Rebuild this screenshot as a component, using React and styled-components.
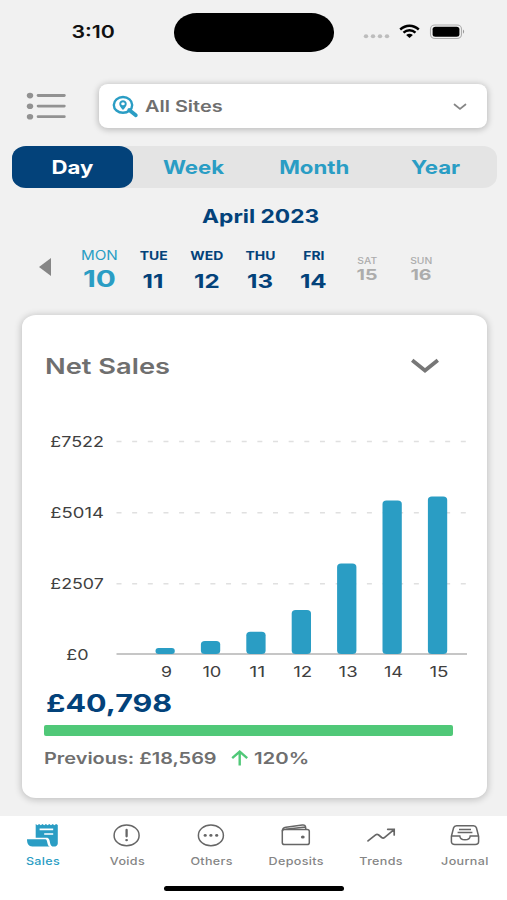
import React from 'react';
import styled, { createGlobalStyle, ThemeProvider } from 'styled-components';

const theme = {
    body: '#f1f1f1',
    card: '#ffffff',
    navy: '#03427a',
    blue: '#2a9dc4',
    green: '#50c878',
    grey: '#6f6f6f',
    muted: '#acacac',
    font: `Inter, 'Liberation Sans', sans-serif`,
};

const GlobalStyle = createGlobalStyle`
    * {
        box-sizing: border-box;
    }

    body {
        margin: 0;
        background-color: #f1f1f1;
    }

    svg {
        display: block;
        flex: none;
        overflow: visible;
    }
`;

const Screen = styled.div`
    width: 507px;
    height: 900px;
    display: flex;
    flex-direction: column;
    overflow: hidden;
    background-color: ${(props) => props.theme.body};
    font-family: ${(props) => props.theme.font};
`;

const Text = styled.span`
    display: inline-block;
    flex: none;
    white-space: nowrap;
    font-size: ${(props) => props.$size}px;
    font-weight: ${(props) => props.$weight || 600};
    line-height: ${(props) => props.$size}px;
    letter-spacing: ${(props) => props.$spacing || 0}px;
    color: ${(props) => props.theme[props.$color] || props.$color};
    transform: scaleX(${(props) => props.$stretch || 1.2});
    transform-origin: ${(props) => props.$origin || 'center'};
`;

const StatusBar = styled.header`
    height: 84px;
    flex: none;
    display: grid;
    grid-template-columns: 174px 160px 1fr;
    padding-top: 13px;
`;

const Clock = styled.div`
    height: 38px;
    display: flex;
    align-items: center;
    justify-content: center;
    padding-left: 12px;
`;

const Island = styled.div`
    height: 38.5px;
    border-radius: 23px / 19px;
    background-color: #000;
`;

const Signals = styled.div`
    height: 38px;
    display: flex;
    align-items: center;
    padding-left: 29px;
`;

const Toolbar = styled.div`
    height: 44px;
    flex: none;
    display: flex;
    align-items: center;
    padding: 0 20px 0 27px;
    gap: 33px;
`;

const SiteSelect = styled.div`
    flex: 1;
    height: 44px;
    display: flex;
    align-items: center;
    padding: 2px 20px 0 13px;
    gap: 6px;
    border-radius: 9px / 8px;
    background-color: ${(props) => props.theme.card};
    box-shadow: 0 1px 6px 1px rgba(0, 0, 0, 0.22);
`;

const Spacer = styled.div`
    flex: 1;
`;

const Tabs = styled.div`
    height: 42px;
    flex: none;
    display: grid;
    grid-template-columns: repeat(4, 1fr);
    margin: 18px 10.5px 0 11.5px;
    border-radius: 14px / 12px;
    background-color: #e4e4e4;
`;

const Tab = styled.div`
    display: flex;
    align-items: center;
    justify-content: center;
    border-radius: 14px / 12px;
    background-color: ${(props) => (props.$active ? props.theme.navy : 'transparent')};
`;

const MonthTitle = styled.div`
    height: 56px;
    flex: none;
    display: flex;
    align-items: center;
    justify-content: center;
    padding-left: 14px;
`;

const Days = styled.div`
    height: 71px;
    flex: none;
    display: flex;
    padding-left: 39px;
`;

const Arrow = styled.div`
    width: 34px;
    padding-top: 14px;
`;

const DayCell = styled.div`
    width: 53.5px;
    display: flex;
    flex-direction: column;
    align-items: center;
    padding-top: ${(props) => props.$top}px;
    gap: ${(props) => props.$gap}px;
`;

const Card = styled.section`
    width: 465px;
    height: 483px;
    flex: none;
    margin-left: 22px;
    border-radius: 14px / 12px;
    background-color: ${(props) => props.theme.card};
    box-shadow: 0 1px 7px 1px rgba(0, 0, 0, 0.2);
`;

const CardHead = styled.div`
    height: 102px;
    display: flex;
    align-items: center;
    justify-content: space-between;
    padding: 0 47px 0 23px;
`;

const Total = styled.div`
    height: 36px;
    display: flex;
    align-items: center;
    padding-left: 24px;
`;

const Progress = styled.div`
    width: 409px;
    height: 11px;
    margin: 3px 0 0 22px;
    border-radius: 2px;
    background-color: ${(props) => props.theme.green};
`;

const Compare = styled.div`
    height: 43px;
    display: flex;
    align-items: center;
    padding-left: 22px;
`;

const Previous = styled.div`
    width: 187px;
`;

const Percent = styled.div`
    padding-left: 5px;
`;

const Nav = styled.nav`
    height: 84px;
    flex: none;
    display: flex;
    flex-direction: column;
    align-items: center;
    margin-top: 18px;
    background-color: ${(props) => props.theme.card};
`;

const NavItems = styled.div`
    width: 507px;
    height: 70px;
    display: grid;
    grid-template-columns: repeat(6, 84.4px);
    padding-left: 1px;
`;

const NavItem = styled.div`
    display: flex;
    flex-direction: column;
    align-items: center;
    padding-top: 7px;
    gap: 8px;
`;

const HomeBar = styled.div`
    width: 180px;
    height: 5px;
    border-radius: 3px;
    background-color: #000;
`;

const tabs = ['Day', 'Week', 'Month', 'Year'];

const days = [
    { name: 'MON', date: 10, kind: 'selected' },
    { name: 'TUE', date: 11, kind: 'open' },
    { name: 'WED', date: 12, kind: 'open' },
    { name: 'THU', date: 13, kind: 'open' },
    { name: 'FRI', date: 14, kind: 'open' },
    { name: 'SAT', date: 15, kind: 'future' },
    { name: 'SUN', date: 16, kind: 'future' },
];

const dayStyles = {
    selected: { top: 6, gap: 5, name: 12.7, nameWeight: 400, date: 22.4, stretch: 1.33, color: 'blue' },
    open: { top: 7, gap: 9, name: 11.6, nameWeight: 700, date: 18.6, stretch: 1.3, color: 'navy' },
    future: { top: 13, gap: 2, name: 8.6, nameWeight: 500, date: 14.8, stretch: 1.32, color: 'muted' },
};

const bars = [
    { hour: 9, height: 6, labelWidth: 11 },
    { hour: 10, height: 13, labelWidth: 19 },
    { hour: 11, height: 22.3, labelWidth: 16 },
    { hour: 12, height: 44, labelWidth: 19 },
    { hour: 13, height: 90.5, labelWidth: 19 },
    { hour: 14, height: 153.5, labelWidth: 19 },
    { hour: 15, height: 157.5, labelWidth: 19 },
];

const gridLines = [
    { label: '£7522', y: 24.6 },
    { label: '£5014', y: 95.8 },
    { label: '£2507', y: 166.8 },
];

const AxisLabel = styled.text`
    font-size: 15px;
    fill: #404040;
`;

const SalesChart = () => (
    <svg width='465' height='269' viewBox='0 0 465 269'>
        {gridLines.map((line) => (
            <g key={line.label}>
                <AxisLabel x='28.3' y={line.y + 5.5} textLength='53.5' lengthAdjust='spacingAndGlyphs'>
                    {line.label}
                </AxisLabel>
                <path
                    d={`M94.5 ${line.y}H445`}
                    stroke='#e0e0e0'
                    strokeWidth='1.5'
                    strokeDasharray='5 10.65'
                />
            </g>
        ))}
        <AxisLabel x='44.2' y='243' textLength='22.3' lengthAdjust='spacingAndGlyphs'>
            £0
        </AxisLabel>
        <path d='M94.5 237H445' stroke='#8e8e8e' strokeWidth='1.2' />
        {bars.map((bar, i) => (
            <g key={bar.hour}>
                <rect
                    x={133.5 + i * 45.4}
                    y={237 - bar.height}
                    width='19.3'
                    height={bar.height}
                    rx={Math.min(4, bar.height / 2)}
                    ry={Math.min(3.5, bar.height / 2)}
                    fill={theme.blue}
                />
                <AxisLabel
                    x={144.5 + i * 45.4}
                    y='259.6'
                    textAnchor='middle'
                    textLength={bar.labelWidth}
                    lengthAdjust='spacingAndGlyphs'
                >
                    {bar.hour}
                </AxisLabel>
            </g>
        ))}
    </svg>
);

const MenuIcon = () => (
    <svg width='39' height='28' viewBox='0 0 39 28' fill='#929292'>
        {[3.6, 14.2, 24.8].map((y) => (
            <g key={y}>
                <ellipse cx='3' cy={y} rx='3.2' ry='2.8' />
                <rect x='9.7' y={y - 1.5} width='29' height='2.8' rx='1.4' />
            </g>
        ))}
    </svg>
);

const SiteIcon = () => (
    <svg width='27' height='22' viewBox='0 0 27 22' fill='none' stroke={theme.blue}>
        <ellipse cx='11' cy='8.9' rx='9.2' ry='7.9' strokeWidth='2.4' />
        <path d='M17.2 14l6.6 5.2' strokeWidth='3.8' strokeLinecap='round' />
        <path
            d='M11 14C8.5 11.2 7.3 9.6 7.3 7.7C7.3 5.7 9 4.2 11 4.2S14.7 5.7 14.7 7.7C14.7 9.6 13.5 11.2 11 14ZM11 6.2A1.8 1.5 0 1 0 11 9.2A1.8 1.5 0 1 0 11 6.2Z'
            fill={theme.blue}
            fillRule='evenodd'
            stroke='none'
        />
    </svg>
);

const StatusIcons = () => (
    <svg width='104' height='20' viewBox='0 0 104 20'>
        <g fill='#bdbdbd'>
            {[3, 10, 17, 24].map((x) => (
                <ellipse key={x} cx={x} cy='14.2' rx='2.2' ry='2' />
            ))}
        </g>
        <g transform='translate(36 3)'>
            <path
                d='M1.2 4.5C6.8 -.6 14.2 -.6 19.8 4.5M4.5 7.7C8 4.5 13 4.5 16.5 7.7'
                fill='none'
                stroke='#000'
                strokeWidth='2.4'
            />
            <path d='M7.1 10.1Q10.5 7.5 13.9 10.1L10.5 13Z' fill='#000' />
        </g>
        <rect x='67.5' y='3' width='31' height='13.5' rx='4.5' ry='4' fill='none' stroke='#adadad' strokeWidth='1.1' />
        <rect x='69.6' y='4.8' width='26.8' height='9.9' rx='2.8' ry='2.5' fill='#000' />
        <path d='M100 7.6Q102.3 9.7 100 11.8Z' fill='#999' />
    </svg>
);

const SalesIcon = () => (
    <svg width='33.4' height='25' viewBox='.6 0 33.4 25' fill={theme.blue}>
        <path d='M9.3 1L11 2.2L12.7 1L14.4 2.2L16.1 1L17.8 2.2L19.5 1L21.2 2.2L22.9 1L24.6 2.2L26.3 1L28 2.2L29.7 1L31.4 2V20.5Q31.2 23.6 27.2 23.6Q24.4 23.6 23.8 20.5C23.2 17.4 23 14.8 20 14.8H9.3Z' />
        <path d='M.6 16.2H18.8C21.7 16.2 20.2 23 23.4 23.4H6C2.2 23.4 .6 20.5 .6 16.2Z' />
        <path d='M13.2 6.4H26.8M17.8 11H26.8' stroke='#fff' strokeWidth='1.6' />
    </svg>
);

const VoidsIcon = () => (
    <svg width='28' height='25' viewBox='1.4 0 28 25' fill='none' stroke='#666'>
        <ellipse cx='14' cy='12.4' rx='12.5' ry='10.4' strokeWidth='1.5' />
        <path d='M14 6.9V13.3' strokeWidth='2.3' strokeLinecap='round' />
        <ellipse cx='14' cy='17.1' rx='1.4' ry='1.2' fill='#666' stroke='none' />
    </svg>
);

const OthersIcon = () => (
    <svg width='28' height='25' viewBox='.6 0 28 25' fill='none' stroke='#666'>
        <ellipse cx='13.5' cy='12.4' rx='12.5' ry='10.4' strokeWidth='1.5' />
        <g fill='#666' stroke='none'>
            <ellipse cx='7.8' cy='12.4' rx='1.6' ry='1.4' />
            <ellipse cx='13.5' cy='12.4' rx='1.6' ry='1.4' />
            <ellipse cx='19.3' cy='12.4' rx='1.6' ry='1.4' />
        </g>
    </svg>
);

const DepositsIcon = () => (
    <svg width='30' height='25' viewBox='0 0 30 25' fill='none' stroke='#666' strokeWidth='1.5'>
        <rect x='1.3' y='6.5' width='27' height='15' rx='2.2' ry='1.8' />
        <path d='M1.4 8.2C1.2 5.4 2.6 4.7 5 4.3L21.3 2C23.5 1.7 24.4 2.5 24.6 4L24.8 6.4M4.8 6.3L24.4 4' />
        <ellipse cx='21.8' cy='14' rx='1.9' ry='1.6' fill='#666' stroke='none' />
    </svg>
);

const TrendsIcon = () => (
    <svg width='30' height='25' viewBox='0 0 30 25' fill='none' stroke='#666' strokeWidth='1.7'>
        <path
            d='M2 17.9L9.6 11.9Q11 10.9 12.4 11.8L15.7 14.5Q17.2 15.6 18.7 14.3L28 6.7M21.7 6.3H28.2V11.9'
            strokeLinecap='round'
        />
    </svg>
);

const JournalIcon = () => (
    <svg width='30' height='25' viewBox='0 0 30 25' fill='none' stroke='#666' strokeWidth='1.5'>
        <path d='M1.4 13.3L3.6 4.8Q4.2 2.7 6.5 2.7H23.5Q25.8 2.7 26.4 4.8L28.6 13.3V18.5Q28.6 21.5 25.2 21.5H4.8Q1.4 21.5 1.4 18.5Z' />
        <path d='M1.5 13H9.8C10.3 18.1 19.7 18.1 20.2 13H28.5M9 6.4H21M7.6 9.6H22.4' />
    </svg>
);

const ChevronSmall = () => (
    <svg width='14' height='8' viewBox='0 0 14 8' fill='none' stroke='#858585' strokeWidth='1.7'>
        <path d='M1.5 1.5L7 6L12.5 1.5' strokeLinecap='round' />
    </svg>
);

const ChevronLarge = () => (
    <svg width='30' height='18' viewBox='0 0 30 18' fill='none' stroke='#777' strokeWidth='3.8'>
        <path d='M2.2 3.3L15 13.5L27.8 3.3' />
    </svg>
);

const UpArrow = () => (
    <svg width='18' height='16' viewBox='0 0 18 16' fill='none' stroke={theme.green}>
        <path d='M8.7 15.5V1.8M1.2 8.2L8.7 1.7L16.2 8.2' strokeWidth='2.4' />
    </svg>
);

const navItems = [
    { label: 'Sales', Icon: SalesIcon },
    { label: 'Voids', Icon: VoidsIcon },
    { label: 'Others', Icon: OthersIcon },
    { label: 'Deposits', Icon: DepositsIcon },
    { label: 'Trends', Icon: TrendsIcon },
    { label: 'Journal', Icon: JournalIcon },
];

const Calendar = () => (
    <Days>
        <Arrow>
            <svg width='12' height='18' viewBox='0 0 12 18'>
                <path d='M12 0V18L0 9Z' fill='#868686' />
            </svg>
        </Arrow>
        {days.map((day) => {
            const look = dayStyles[day.kind];
            return (
                <DayCell key={day.name} $top={look.top} $gap={look.gap}>
                    <Text $size={look.name} $weight={look.nameWeight} $color={look.color}>
                        {day.name}
                    </Text>
                    <Text
                        $size={look.date}
                        $weight={700}
                        $stretch={look.stretch}
                        $color={look.color}
                    >
                        {day.date}
                    </Text>
                </DayCell>
            );
        })}
    </Days>
);

const App = () => {
    return (
        <ThemeProvider theme={theme}>
            <GlobalStyle />
            <Screen>
                <StatusBar>
                    <Clock>
                        <Text $size={17.8} $color='#111'>3:10</Text>
                    </Clock>
                    <Island />
                    <Signals>
                        <StatusIcons />
                    </Signals>
                </StatusBar>
                <Toolbar>
                    <MenuIcon />
                    <SiteSelect>
                        <SiteIcon />
                        <Text $size={15.8} $stretch={1.26} $color='grey' $origin='left'>
                            All Sites
                        </Text>
                        <Spacer />
                        <ChevronSmall />
                    </SiteSelect>
                </Toolbar>
                <Tabs>
                    {tabs.map((tab, i) => (
                        <Tab key={tab} $active={i === 0}>
                            <Text $size={18.5} $weight={700} $color={i === 0 ? '#fff' : 'blue'}>
                                {tab}
                            </Text>
                        </Tab>
                    ))}
                </Tabs>
                <MonthTitle>
                    <Text $size={18.5} $weight={650} $stretch={1.23} $color='navy'>
                        April 2023
                    </Text>
                </MonthTitle>
                <Calendar />
                <Card>
                    <CardHead>
                        <Text $size={22} $stretch={1.24} $color='grey' $origin='left'>
                            Net Sales
                        </Text>
                        <ChevronLarge />
                    </CardHead>
                    <SalesChart />
                    <Total>
                        <Text
                            $size={24}
                            $weight={700}
                            $stretch={1.27}
                            $color='navy'
                            $origin='left'
                        >
                            £40,798
                        </Text>
                    </Total>
                    <Progress />
                    <Compare>
                        <Previous>
                            <Text $size={15.8} $stretch={1.26} $color='grey' $origin='left'>
                                Previous: £18,569
                            </Text>
                        </Previous>
                        <UpArrow />
                        <Percent>
                            <Text $size={15.8} $stretch={1.29} $color='grey' $origin='left'>
                                120%
                            </Text>
                        </Percent>
                    </Compare>
                </Card>
                <Nav>
                    <NavItems>
                        {navItems.map(({ label, Icon }, i) => (
                            <NavItem key={label}>
                                <Icon />
                                <Text
                                    $size={11}
                                    $weight={450}
                                    $spacing={0.3}
                                    $stretch={1.14}
                                    $color={i === 0 ? 'blue' : '#858585'}
                                >
                                    {label}
                                </Text>
                            </NavItem>
                        ))}
                    </NavItems>
                    <HomeBar />
                </Nav>
            </Screen>
        </ThemeProvider>
    );
};

export default App;
